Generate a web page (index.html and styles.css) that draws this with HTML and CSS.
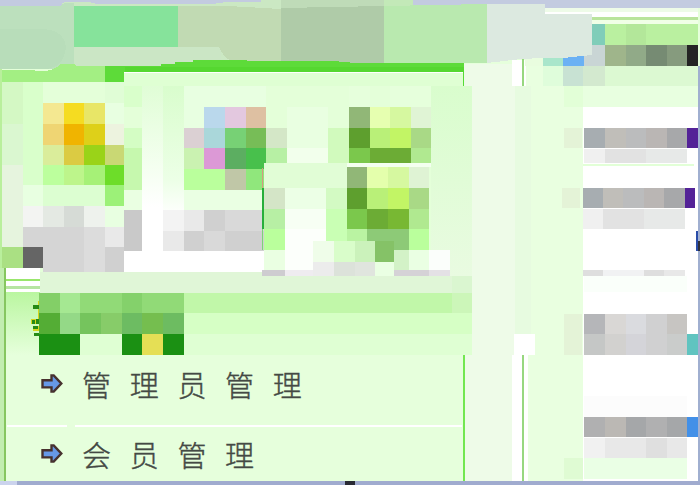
FILE: index.html
```html
<!DOCTYPE html>
<html lang="zh-CN">
<head>
<meta charset="utf-8">
<title>管理</title>
<link rel="stylesheet" href="styles.css">
</head>
<body>
<div class="page">
  <header class="banner">
    <svg class="art" viewBox="0 0 700 66" width="700" height="66">
      <path fill="#c3cbe0" d="M0 0h700v8H0z"/>
      <path fill="#cbe8c3" d="M62 3q6-2 12-1h15l8 2h115l14-2h35V0h133v6h103v54H160v6H62z"/>
      <path fill="#c3e9b8" d="M384 0h29v6h-29z"/>
      <path fill="#bce0bd" d="M0 6h60l5-3h9v63l-8-2-6 1-5 4H0z"/>
      <path fill="#b8ddba" d="M0 29h40q24 0 26 18-1 12-8 18-8 5-20 4H0z"/>
      <path fill="#86e39b" d="M74 6h104v41H74z"/>
      <path fill="#cbe6c5" d="M74 47h147v19H74z"/>
      <path fill="#c1dab3" d="M178 6h50l53 3v52h-50q-8-4-12-14h-41z"/>
      <path fill="#bfdbb8" d="M281 0h103v8H281z"/>
      <path fill="#afcba8" d="M281 8l103-2v57H281z"/>
      <path fill="#b9e9af" d="M384 6l103-2v59H384z"/>
      <path fill="#eefbe8" d="M545 8h153v4H545z"/>
      <path fill="#fff" d="M545 12h153v54H545z"/>
      <path fill="#b9e49c" d="M590 17h108v3H590z"/>
      <path fill="#f0ffe6" d="M592 20h106v4H592z"/>
      <path fill="#80cdb9" d="M592 24h13v21h-13z"/>
      <path fill="#baf0a0" d="M605 24h93v21h-93z"/>
      <path fill="#b3e79a" d="M626 24h20v21h-20z"/>
      <path fill="#c9d5d5" d="M584 45h21v21h-21z"/>
      <path fill="#9fb58b" d="M605 45h21v21h-21z"/>
      <path fill="#91aa88" d="M626 45h20v21h-20z"/>
      <path fill="#768b73" d="M646 45h21v21h-21z"/>
      <path fill="#869b7e" d="M667 45h20v21h-20z"/>
      <path fill="#242424" d="M687 45h11v21h-11z"/>
      <path fill="#e9fddf" d="M525 55h18v11h-18z"/>
      <path fill="#a9e6cb" d="M543 55h20v11h-20z"/>
      <path fill="#6bb1f4" d="M563 53h21v13h-21z"/>
      <path fill="#dce9e0" d="M487 4h58v10h47v41l-29 3h-20l-22 1-34 4z"/>
      <path fill="#a3ef83" d="M2 70l23 0 20 1q8-1 12-4l4-3h13l2 2h29v16H2z"/>
      <path fill="#5ddb39" d="M105 66h56v-2h14v-2h18v-2h38l32 1h70l22 2h109v9H124v10h-19z"/>
      <path fill="#50d42c" d="M125 67h339v5H125z" opacity=".6"/>
    </svg>
  </header>

  <main class="content">
    <section class="left">
      <svg class="art tools" viewBox="0 66 472 210" width="472" height="210">
        <defs>
          <linearGradient id="fade" x1="0" y1="0" x2="0" y2="1"><stop offset="0" stop-color="#e0fdd6"/><stop offset=".45" stop-color="#f5fff1"/><stop offset=".65" stop-color="#fff"/></linearGradient>
          <linearGradient id="side" x1="0" y1="0" x2="0" y2="1"><stop offset="0" stop-color="#d9fdcd"/><stop offset=".5" stop-color="#ecffe6"/><stop offset=".7" stop-color="#fff"/></linearGradient>
          <linearGradient id="edge" x1="0" y1="0" x2="0" y2="1"><stop offset="0" stop-color="#d9fdcd"/><stop offset="1" stop-color="#e9fbe1"/></linearGradient>
        </defs>
        <path fill="#e4ffd9" d="M0 66h472v210H0z"/>
        <path fill="#b9ef9c" d="M0 66h2v202H0z"/>
        <path fill="url(#edge)" d="M431 86h41v190h-41z"/>
        <path fill="#dfffd3" d="M124 72h340v14H124z"/>
        <path fill="#fff" d="M124 72h340v1H124zM465 64h7v22h-7z"/>
        <path fill="#55dc35" d="M463 72h1v14h-1z"/>
        <path fill="#d4f8c4" d="M2 82h21v42H2z"/>
        <path fill="#daf7d0" d="M2 124h21v41H2z"/>
        <path fill="#e6f4de" d="M2 165h21v82H2z"/>
        <path fill="#aae083" d="M2 247h21v21H2z"/>
        <path fill="#d9ffcb" d="M23 82h20v103H23zM124 86h18v21h-18z"/>
        <path fill="#e0fdd6" d="M105 82h19v21h-19z"/>
        <path fill="#e8ffe1" d="M105 103h19v21h-19zM184 86h82v42h-82zM23 185h101v21H23z"/>
        <path fill="url(#fade)" d="M142 86h21v186h-21z"/>
        <path fill="url(#side)" d="M163 86h21v186h-21z"/>
        <path fill="#f4e891" d="M43 103h21v21H43z"/><path fill="#f5dc21" d="M64 103h20v21H64z"/><path fill="#e8e667" d="M84 103h21v21H84z"/>
        <path fill="#efd573" d="M43 124h21v21H43z"/><path fill="#f0b400" d="M64 124h20v21H64z"/><path fill="#ded019" d="M84 124h21v21H84z"/><path fill="#edf3df" d="M105 124h19v21h-19z"/>
        <path fill="#daed9b" d="M43 145h21v20H43z"/><path fill="#dbcb43" d="M64 145h20v20H64z"/><path fill="#9ad318" d="M84 145h21v20H84z"/><path fill="#c9d874" d="M105 145h19v20h-19z"/>
        <path fill="#bcff9d" d="M43 165h21v20H43z"/><path fill="#bdf58b" d="M64 165h20v20H64z"/><path fill="#a6f177" d="M84 165h21v20H84z"/><path fill="#6ddd29" d="M105 165h19v20h-19z"/>
        <path fill="#dcfed1" d="M43 185h62v21H43z"/><path fill="#9cf178" d="M105 185h19v21h-19z"/>
        <path fill="#d4fdc4" d="M124 128h18v20h-18z"/><path fill="#c6f8ae" d="M124 148h18v42h-18z"/><path fill="#eaffe2" d="M124 190h18v20h-18z"/>
        <path fill="#f3f4f2" d="M23 206h20v21H23z"/><path fill="#e4e9e3" d="M43 206h21v21H43z"/><path fill="#d6dbd6" d="M64 206h20v21H64z"/><path fill="#eef2ed" d="M84 206h21v21H84z"/><path fill="#e8ffe1" d="M105 206h19v21h-19z"/>
        <path fill="#d5d5d5" d="M23 227h61v45H43v-25H23z"/><path fill="#dcdcdc" d="M84 227h21v45H84z"/><path fill="#e9e9e9" d="M105 227h19v20h-19z"/><path fill="#d0d0d0" d="M105 247h19v25h-19z"/>
        <path fill="#656565" d="M23 247h20v21H23z"/>
        <path fill="#c9c9c9" d="M124 210h18v41h-18z"/>
        <path fill="#fff" d="M124 251h140v21H124zM6 268h34v8H6z"/>
        <path fill="#bad8ec" d="M204 107h21v21h-21z"/><path fill="#e3c8df" d="M225 107h21v21h-21z"/><path fill="#dec0a2" d="M246 107h20v21h-20z"/>
        <path fill="#dbd0d3" d="M184 128h20v20h-20z"/><path fill="#aad7da" d="M204 128h21v20h-21z"/><path fill="#77d175" d="M225 128h21v20h-21z"/><path fill="#77bd57" d="M246 128h20v20h-20z"/><path fill="#d4e7c7" d="M266 128h21v20h-21z"/>
        <path fill="#caf2b1" d="M184 148h20v21h-20z"/><path fill="#dc99d6" d="M204 148h21v21h-21z"/><path fill="#5cae61" d="M225 148h21v21h-21z"/><path fill="#48c04c" d="M246 148h20v21h-20z"/><path fill="#b7f0a4" d="M266 148h21v15h-21z"/>
        <path fill="#baff9c" d="M184 169h41v21h-41z"/><path fill="#c0c7a7" d="M225 169h21v21h-21z"/><path fill="#90e77c" d="M246 169h18v21h-18z"/>
        <path fill="#eaffe3" d="M184 190h80v20h-80z"/>
        <path fill="#f3f3f3" d="M163 210h21v21h-21z"/><path fill="#e9e9e9" d="M184 210h20v21h-20zM163 231h21v20h-21z"/><path fill="#d0d0d0" d="M204 210h21v21h-21zM184 231h80v20h-80z"/><path fill="#d9d9d9" d="M225 210h39v21h-39zM204 231h21v20h-21z"/>
        <path fill="#e9ffe1" d="M287 107h41v41h-41z"/><path fill="#f2ffec" d="M287 148h41v15h-41z"/><path fill="#d1fabd" d="M328 128h21v35h-21z"/>
        <path fill="#e6ffdc" d="M349 86h21v21h-21zM390 86h41v21h-41z"/>
        <path fill="#91b777" d="M349 107h21v21h-21z"/><path fill="#e6ffb0" d="M370 107h20v21h-20z"/><path fill="#d6f8a0" d="M390 107h21v21h-21z"/><path fill="#e0f4d5" d="M411 107h20v21h-20z"/>
        <path fill="#5e9f2e" d="M349 128h21v20h-21z"/><path fill="#b9f078" d="M370 128h20v20h-20z"/><path fill="#c2f565" d="M390 128h21v20h-21z"/><path fill="#a9d986" d="M411 128h20v20h-20z"/>
        <path fill="#7bc84c" d="M349 148h21v15h-21z"/><path fill="#6cac35" d="M370 148h41v15h-41z"/><path fill="#b0e990" d="M411 148h20v15h-20z"/>
        <path fill="#e1fdd6" d="M264 163h83v25h-83z"/><path fill="#f4fff0" d="M347 163h84v4h-84z"/>
        <path fill="#d59a80" d="M262 168h1v20h-1z"/><path fill="#28ae3b" d="M262 188h2v41h-2z"/><path fill="#7bd476" d="M262 229h1v21h-1z"/>
        <path fill="#d4e5c7" d="M264 188h21v21h-21z"/><path fill="#b7efa4" d="M264 209h21v20h-21z"/><path fill="#baff9c" d="M264 229h21v21h-21z"/><path fill="#eaffe2" d="M264 250h21v20h-21z"/>
        <path fill="#ecffe6" d="M285 188h41v21h-41z"/><path fill="#f7fff4" d="M285 209h41v20h-41z"/><path fill="#fcfffb" d="M285 229h41v41h-41z"/>
        <path fill="#d3fac3" d="M326 188h21v21h-21z"/><path fill="#c9ffb4" d="M326 209h21v32h-21z"/>
        <path fill="#91b777" d="M347 167h20v21h-20z"/><path fill="#e4ffac" d="M367 167h21v21h-21z"/><path fill="#d6f8a0" d="M388 167h21v21h-21z"/><path fill="#dff3d4" d="M409 167h20v21h-20z"/>
        <path fill="#5e9f2e" d="M347 188h20v21h-20z"/><path fill="#b9f078" d="M367 188h21v21h-21z"/><path fill="#c2f565" d="M388 188h21v21h-21z"/><path fill="#a9d986" d="M409 188h20v21h-20z"/>
        <path fill="#7bc84c" d="M347 209h20v20h-20z"/><path fill="#6cac35" d="M367 209h21v20h-21z"/><path fill="#78b833" d="M388 209h21v20h-21z"/><path fill="#b0e990" d="M409 209h20v20h-20z"/>
        <path fill="#baf3a2" d="M347 229h20v12h-20z"/><path fill="#8dca77" d="M367 229h42v21h-42z"/><path fill="#baff9c" d="M409 229h20v21h-20z"/>
        <path fill="#effde9" d="M313 241h21v21h-21z"/><path fill="#d9fdca" d="M334 241h21v21h-21z"/><path fill="#cbf2bb" d="M355 241h20v21h-20z"/><path fill="#85c267" d="M375 241h19v21h-19z"/>
        <path fill="#d3f2c7" d="M394 250h15v20h-15z"/><path fill="#eaffe3" d="M409 250h20v20h-20zM375 262h19v14h-19z"/><path fill="#fbfefb" d="M429 250h21v20h-21z"/>
        <path fill="#ececec" d="M313 262h21v14h-21z"/><path fill="#dce2da" d="M334 262h21v14h-21z"/><path fill="#e0e5de" d="M355 262h20v14h-20z"/>
        <path fill="#ceccd0" d="M262 270h23v6h-23z"/><path fill="#efecf0" d="M285 270h28v6h-28z"/><path fill="#d5d2d6" d="M394 270h35v6h-35z"/><path fill="#e4e1e5" d="M429 270h21v6h-21z"/>
        <path fill="#e0f6d7" d="M40 272h222v4H40z"/><path fill="#c2edb0" d="M0 268h4v8H0z"/><path fill="#86c660" d="M4 268h2v8H4z"/>
      </svg>

      <svg class="art heading" viewBox="0 276 472 79" width="472" height="79">
        <defs><linearGradient id="tab" x1="0" y1="0" x2="0" y2="1"><stop offset="0" stop-color="#baf6a0"/><stop offset="1" stop-color="#e6ffdc"/></linearGradient></defs>
        <path fill="#c2edb0" d="M0 276h4v79H0z"/><path fill="#86c660" d="M4 276h2v79H4z"/>
        <path fill="#fff" d="M6 276h34v16H6z"/><path fill="#99e66c" d="M6 279h34v2H6z"/><path fill="#b6e5a1" d="M6 286h34v3H6z"/>
        <path fill="url(#tab)" d="M6 292h34v63H6z"/>
        <path fill="#e0f6d7" d="M40 276h412v17H40z"/><path fill="#daf6d0" d="M452 276h20v17h-20z"/>
        <path fill="#c1f7a9" d="M40 293h412v20H40z"/><path fill="#ccf6b9" d="M452 293h20v20h-20z"/>
        <path fill="#d6ffc5" d="M40 313h432v21H40z"/><path fill="#dfffd3" d="M40 334h432v21H40z"/>
        <path fill="#d7d51c" d="M38 301h2v19h-2zM31 319h6v5h-6zM33 326h6v5h-6z"/><path fill="#258b15" d="M33 305h7v4h-7zM32 320h3v4h-3zM36 319h4v5h-4zM33 326h5v3h-5zM34 333h6v3h-6z"/>
        <path fill="#83cf67" d="M39 293h21v20H39z"/><path fill="#a5e892" d="M60 293h20v20H60z"/><path fill="#91da77" d="M80 293h104v20H80z"/><path fill="#84d16b" d="M122 293h20v20h-20z"/>
        <path fill="#54ad35" d="M39 313h21v21H39z"/><path fill="#94d987" d="M60 313h20v21H60z"/><path fill="#75c45d" d="M80 313h21v21H80z"/><path fill="#87cc69" d="M101 313h21v21h-21z"/><path fill="#6dbc62" d="M122 313h20v21h-20z"/><path fill="#75be4f" d="M142 313h21v21h-21z"/><path fill="#6dbc61" d="M163 313h21v21h-21z"/>
        <path fill="#1b9013" d="M39 334h41v21H39zM122 334h20v21h-20zM163 334h21v21h-21z"/><path fill="#e5df55" d="M142 334h21v21h-21z"/>
      </svg>

      <nav class="menu">
        <a class="item">
          <svg class="arrow" viewBox="0 0 24 24" width="24" height="24"><path d="M2.5 8.2h9V3.4h2.2l7.6 8.1-7.6 8.1h-2.2v-4.2h-9z" fill="#6699e8" stroke="#47322f" stroke-width="2.4"/></svg>
          <span>管理员管理</span>
        </a>
        <a class="item">
          <svg class="arrow" viewBox="0 0 24 24" width="24" height="24"><path d="M2.5 8.2h9V3.4h2.2l7.6 8.1-7.6 8.1h-2.2v-4.2h-9z" fill="#6699e8" stroke="#47322f" stroke-width="2.4"/></svg>
          <span>会员管理</span>
        </a>
      </nav>
    </section>

    <svg class="art gutter" viewBox="472 66 111 415" width="111" height="415">
      <path fill="#eefbe8" d="M464 64h48v22h-48zM472 86h43v269h-43zM465 355h47v126h-47z"/>
      <path fill="#e7fbe0" d="M515 86h16v248h-16z"/>
      <path fill="#e9ffe0" d="M531 86h52v395h-52zM525 66h58v20h-58zM525 355h15v126h-15z"/>
      <path fill="#fff" d="M512 60h10v26h-10zM512 355h16v126h-16zM514 334h21v21h-21zM523 60h3v26h-3z"/>
      <path fill="#97d77f" d="M522 59h2v27h-2zM522 355h2v126h-2z"/>
      <path fill="#dffddb" d="M543 66h20v20h-20z"/><path fill="#c8e2d3" d="M563 66h20v20h-20z"/>
      <path fill="#e2ffd7" d="M564 86h19v21h-19z"/>
      <path fill="#e4f3d7" d="M564 128h18v20h-18zM562 188h18v20h-18zM564 314h18v41h-18z"/>
      <path fill="#dffbd3" d="M564 458h19v21h-19z"/>
    </svg>

    <svg class="art records" viewBox="583 66 117 415" width="117" height="415">
      <path fill="#fff" d="M583 66h115v415H583z"/>
      <path fill="#d3e9cf" d="M583 66h22v20h-22z"/><path fill="#dcf9d2" d="M605 66h93v20h-93z"/><path fill="#e8ffe0" d="M583 86h115v21H583z"/>
      <path fill="#a7adb1" d="M584 128h21v20h-21zM582 188h21v20h-21z"/><path fill="#c0beb9" d="M605 128h21v20h-21zM603 188h20v20h-20z"/><path fill="#bbbcbd" d="M626 128h20v20h-20zM623 188h21v20h-21z"/><path fill="#bab6b4" d="M646 128h21v20h-21zM644 188h20v20h-20z"/><path fill="#a7a8aa" d="M667 128h20v20h-20zM664 188h21v20h-21z"/><path fill="#532297" d="M687 128h11v20h-11zM685 188h10v20h-10z"/>
      <path fill="#f0f0f0" d="M584 149h21v14h-21zM582 209h21v20h-21z"/><path fill="#e2e2e2" d="M605 149h41v14h-41zM603 209h41v20h-41z"/><path fill="#e7e9e8" d="M646 149h41v14h-41zM644 209h41v20h-41z"/>
      <path fill="#e2ffd7" d="M583 164h111v2H583z"/>
      <path fill="#dedede" d="M582 270h21v6h-21zM644 270h20v6h-20z"/><path fill="#f1f2f3" d="M603 270h41v6h-41z"/><path fill="#e8e8e8" d="M664 270h21v6h-21z"/><path fill="#fafffa" d="M584 276h103v16H584z"/>
      <path fill="#b5b6b9" d="M584 314h21v20h-21z"/><path fill="#d9d7d5" d="M605 314h21v20h-21z"/><path fill="#dadbdf" d="M626 314h20v20h-20z"/><path fill="#d0d0d1" d="M646 314h21v41h-21z"/><path fill="#c7c5c2" d="M667 314h20v20h-20z"/>
      <path fill="#c5c7c6" d="M584 334h21v21h-21z"/><path fill="#d2d1cf" d="M605 334h21v21h-21z"/><path fill="#d4d4d9" d="M626 334h20v21h-20z"/><path fill="#cacccb" d="M667 334h20v21h-20z"/><path fill="#60c4c0" d="M687 334h11v21h-11z"/>
      <path fill="#fcfcfc" d="M584 396h103v21H584z"/>
      <path fill="#b0b0b1" d="M584 417h103v20H584z"/><path fill="#bbb8b4" d="M605 417h21v20h-21z"/><path fill="#a5a7a9" d="M626 417h20v20h-20zM667 417h20v20h-20z"/><path fill="#4290e8" d="M687 417h11v20h-11z"/>
      <path fill="#f1f1f1" d="M584 438h21v20h-21z"/><path fill="#e8e8e8" d="M605 438h82v20h-82z"/><path fill="#dfdfdf" d="M646 438h21v20h-21z"/><path fill="#eaffe5" d="M584 458h103v21H584z"/>
      <path fill="#a0afd0" d="M698 24h2v457h-2z"/><path fill="#294ca8" d="M696 231h2v20h-2z"/><path fill="#303039" d="M698 241h2v10h-2z"/>
    </svg>
  </main>
  <footer class="status"><span class="mark"></span></footer>
</div>
</body>
</html>
```

FILE: styles.css
```css
* {
  box-sizing: border-box;
}

body {
  margin: 0;
  overflow: hidden;
  background: #e6ffdc;
}

.page {
  display: grid;
  grid-template-rows: 66px 415px 4px;
  width: 700px;
  height: 485px;
}

.art {
  display: block;
  overflow: visible;
  shape-rendering: crispEdges;
}

.banner {
  position: relative;
  z-index: 1;
}

.content {
  display: grid;
  grid-template-columns: 472px 111px 117px;
}

.left {
  display: grid;
  grid-template-rows: 210px 79px 126px;
}

.tools,
.records {
  overflow: hidden;
}

.menu {
  display: grid;
  grid-template-rows: 72px 54px;
  width: 465px;
  border-left: 4px solid #c2edb0;
  border-right: 2px solid #72e750;
  box-shadow: inset 2px 0 #86c660;
  background: #e6ffdc;
}

.item {
  display: flex;
  align-items: flex-start;
  gap: 18px;
  margin: 0 1px 0 3px;
  padding: 10px 0 0 33px;
  color: #444944;
  font: 300 29px/38px "Noto Sans CJK SC", sans-serif;
  letter-spacing: 18.7px;
  white-space: nowrap;
  -webkit-text-stroke: 0.4px #444944;
}

.item:first-child {
  border-bottom: 2px solid;
  border-image: linear-gradient(90deg, #fff 61px, transparent 61px, transparent 69px, #fff 69px) 2;
}

.item:last-child {
  padding-top: 8px;
}

.arrow {
  flex: none;
  margin-top: 7px;
}

.status {
  display: flex;
  background: #a0abcf;
  border-left: 17px solid #cbd3ed;
}

.mark {
  width: 10px;
  margin-left: 328px;
  background: #292a35;
}
```
